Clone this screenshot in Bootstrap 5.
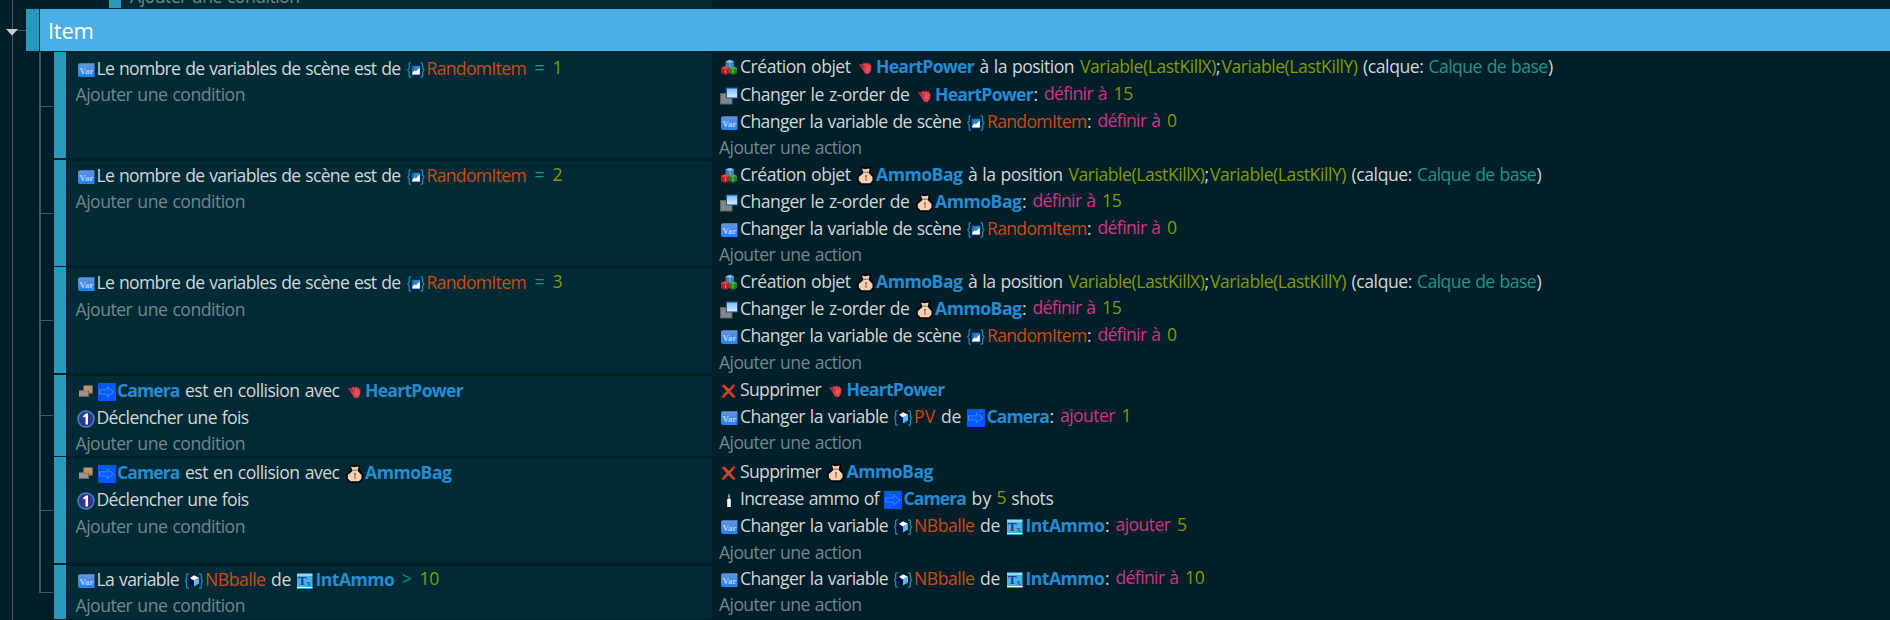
<!DOCTYPE html>
<html lang="fr">
<head>
<meta charset="utf-8">
<title>Item</title>
<link href="https://cdn.jsdelivr.net/npm/bootstrap@5.3.0/dist/css/bootstrap.min.css" rel="stylesheet">
<style>
body{background:#001f29;color:#d2d6d7;font-family:"Open Sans","Noto Sans",sans-serif;font-size:17.6px;line-height:27px;overflow:hidden}
.sheet{height:620px;position:relative;overflow:hidden}
.sheet::before{content:"";position:absolute;left:12px;top:0;bottom:0;width:1px;background:#46575e}
.prev{height:8px;margin:0 0 1px 109px}
.bar{width:12px;background:#2799ba;flex:none}
.prev .cond{width:590px;margin:0 0 0 1px;padding:0 0 0 8px}
.prev .line{margin-top:-17px}
.group-head{height:42px;margin-left:26px;position:relative}
.group-head::before{content:"";position:absolute;left:-13px;top:21px;width:13px;height:1px;background:#46575e}
.group-head .bar{width:13px;margin-right:1px}
.caret{position:absolute;left:-20px;top:20px}
.title{background:#4aafe4;color:#fff;font-size:22px;font-weight:500;padding-left:8px}
.children{padding:1px 0 0 39px;position:relative}
.ev{padding-left:15px;position:relative;padding-bottom:2px}
.ev::before{content:"";position:absolute;left:0;top:0;bottom:0;width:2px;background:#42545a}
.ev::after{content:"";position:absolute;left:0;top:calc(50% - 1px);width:14px;height:1px;background:#46575e}
.ev:first-child::after{top:50%}
.ev:last-child::before{bottom:auto;height:27px}
.tight{padding-bottom:1px}
.ev .bar{margin-right:2px}
.cond{background:#002b36;width:644px;padding:1px 0 0 7.5px;margin-top:1px;flex:none}
.act{padding:1px 0 0 7px}
.line{height:27px;white-space:pre}
.add{height:26px;color:#74868b}
.tight .add{margin-top:-1px}
.ev:first-child .cond{padding-top:2px}
.ev:first-child .act .line:nth-child(2){margin-top:1px}
.ev:first-child .add{margin-top:-1px}
.ev:last-child .cond,.ev:last-child .act{padding-top:0}
.h108{height:108px}.h107{height:107px}.h82{height:82px}.h56{height:55px}
.ic{width:18px;height:18px;flex:none;margin-top:3px;margin-left:6px}
.line>.ic:first-child{margin-left:1px}
.o{color:#268bd2;font-weight:700}
.v{color:#cb4b16}
.n,.e{color:#859900}
.q{color:#229488}
.m{color:#cf3583}
.n,.m,.q{margin-bottom:2px}
.defs{position:absolute}
</style>
</head>
<body>
<svg width="0" height="0" class="defs">
<defs>
<linearGradient id="gb" x1="0" y1="0" x2="0" y2="1"><stop offset="0" stop-color="#6595d8"/><stop offset="1" stop-color="#2182fb"/></linearGradient>
<linearGradient id="gs" x1="0" y1="0" x2="0" y2="1"><stop offset="0" stop-color="#7bbcf5"/><stop offset="1" stop-color="#d5ecff"/></linearGradient>
<linearGradient id="gt" x1="0" y1="0" x2="1" y2="1"><stop offset="0" stop-color="#1769ad"/><stop offset="1" stop-color="#48bdf0"/></linearGradient>
</defs>
</svg>
<template id="icons"><svg>
<g id="var"><path d="M3 2.300H17.500V16H3Q1 16 1 14V4.500Q1 2.300 3 2.300Z" fill="url(#gb)"/><text x="2.500" y="12.600" font-family="Liberation Serif, serif" font-weight="700" font-size="9" textLength="14" lengthAdjust="spacingAndGlyphs" fill="#b4d2ff">Var</text></g>
<g id="scn"><path d="M4 1.800H3Q2.200 1.800 2.200 3V7L.8 9 2.200 11V15Q2.200 16.200 3 16.200H4M13.500 1.800H14.500Q15.600 1.800 15.600 3V7L17 9 15.600 11V15Q15.600 16.200 14.500 16.200H13.500" fill="none" stroke="#2189b8" stroke-width="1.300"/><rect x="4" y="3.800" width="10" height="10.800" fill="#082d68"/><rect x="5.200" y="5" width="7.600" height="8.400" fill="url(#gt)"/><path d="M5.200 13.400V12L7.500 9.500 9 10.500 12.800 6.500V13.400Z" fill="#fff"/></g>
<g id="ovr"><path d="M4 1.800H3Q1.600 1.800 1.600 3V7L.6 9 1.600 11V15Q1.600 16.200 3 16.200H4M14 1.800H15Q16.400 1.800 16.400 3V7L17.400 9 16.400 11V15Q16.400 16.200 15 16.200H14" fill="none" stroke="#2189b8" stroke-width="1.300"/><path d="M9 3.200 14.300 6V11.500L9 14.800 4 11.500V6Z" fill="#030c54"/><path d="M9 3.200 14 5.800 9 8.500 5 6Z" fill="#fff"/><path d="M9 8.500 14 5.800V11.500L9 14.600Z" fill="#51bfee"/></g>
<g id="heart"><path d="M2 5.500 5.500 5.500 7 3.500 8.500 5 10 3 11 5 13 4.200 13.200 6 14.500 6.500 14 12 11.500 15.300 8 14.500 6 11Z" fill="#d9404d"/><path d="M2 5.500 6 5.800 8 8 6.500 10Z" fill="#a52f3b"/><path d="M9 7 13 8 12 12 9 12Z" fill="#e5525c"/></g>
<g id="bag"><path d="M4 0H14V5L17 9V14L14 18H4L0 14V9L5 5Z" fill="#060606"/><path d="M5 1.500 8 2.300 12.500 1.500 11.800 6 15.500 10V13.500L13 16.200H4.500L1.800 13.500V10L6.500 6Z" fill="#f6cfb5"/><path d="M6 5.200H12" stroke="#80664f"/><path d="M9 8V14" stroke="#c58a52" stroke-width="1.700"/><path d="M9 8V10" stroke="#57646b"/></g>
<g id="cam"><rect width="18" height="18" fill="#0058ff"/><path d="M1.500 6.800H9.500V3.800L16 9 9.500 14V11H1.500Z" fill="#075cff" stroke="#4389ff" stroke-width=".9"/></g>
<g id="tx"><rect x="1" y="1.300" width="15.500" height="15.500" fill="#45b3e3"/><path d="M1 3H16.500M1 15.500H16.500" stroke="#e6faff" stroke-width="1.200"/><text x="2" y="12.800" font-family="Liberation Serif, serif" font-weight="700" font-size="13" fill="#22348c">T</text><text x="10.500" y="14" font-family="Liberation Serif, serif" font-weight="700" font-size="9" fill="#35569e">x</text></g>
<g id="cubes"><path d="M5.500 2.500 10 .8 14 2.500V8L10 10 5.500 8Z" fill="#347fc1"/><path d="M5.500 2.500 10 .8 14 2.500 10 4.300Z" fill="#85bee8"/><path d="M1 9 5.500 7 9.500 9V14L5.500 16 1 14Z" fill="#b71d25"/><path d="M1 9 5.500 7 9.500 9 5.500 10.800Z" fill="#d84650"/><path d="M9 9 13 7 17 9V14L13 16 9 14Z" fill="#178423"/><path d="M9 9 13 7 17 9 13 10.800Z" fill="#46ad47"/><path d="M10 4.500V8M5.500 11V14M13 11V14" stroke="#ffffff66" stroke-width="1.200"/></g>
<g id="z"><rect y="6" width="12.500" height="11.500" fill="#5d6365"/><rect x="1" y="7" width="10.500" height="9.500" fill="#828787"/><rect x="5.800" y=".5" width="12" height="11" fill="#225c99"/><rect x="7" y="1.600" width="10" height="8.800" fill="url(#gs)"/></g>
<g id="del"><path d="M2 4Q3 2 5 3L9 7 13 2.500 15.500 3 10.500 9 15.500 15 13.500 16 8.500 11 3.500 16 1.500 15 6.500 9Z" fill="#cd4929" stroke="#842817" stroke-width=".9"/></g>
<g id="ammo"><path d="M8 5Q9 0 10 5V9H8Z" fill="#9ca4a6"/><path d="M7.200 8H10.800V16H7.200Z" fill="#fff"/><path d="M7.500 6.500H10.500" stroke="#5e6869"/></g>
<g id="col"><rect x="6.500" y="2.500" width="9" height="8" fill="#bd946b"/><path d="M6.500 10H15.500V3.500" fill="none" stroke="#806040"/><rect x="2" y="7.500" width="9.500" height="6.500" fill="#999593"/><path d="M2 13.500H11.500V7.500" fill="none" stroke="#6d6866"/><rect x="6.500" y="7.500" width="4" height="2" fill="#b56f6d"/></g>
<g id="once"><circle cx="9" cy="9" r="8" fill="#31358f" stroke="#338dbd" stroke-width="1.500"/><path d="M6 6 9 3.500H11V14.500H8.500V6.500L6.500 7.500Z" fill="#fff"/></g>
</svg></template>

<main class="sheet">
  <div class="prev d-flex"><div class="bar"></div><div class="cond overflow-hidden" id="prev"></div></div>
  <header class="group-head d-flex">
    <svg class="caret" width="12" height="7"><path d="M0 0H12L6 6.500Z" fill="#cfcdcb"/></svg>
    <div class="bar"></div>
    <div class="title flex-grow-1 d-flex align-items-center"><span data-w="45.5">Item</span></div>
  </header>
  <section class="children" id="events"></section>
</main>
<script src="https://cdn.jsdelivr.net/npm/bootstrap@5.3.0/dist/js/bootstrap.bundle.min.js"></script>
<script>
// token: "#icon" or [kind, text, width, gap before]
const t = (s, w, g = 5.5) => ['t', s, w, g];
const first = (s, w) => t(s, w, 2);
const obj = {
  heart: ['#heart', ['o', 'HeartPower', 98, 1.5]],
  bag: ['#bag', ['o', 'AmmoBag', 86.5, 1.5]],
  cam: ['#cam', ['o', 'Camera', 62.5, 1.5]],
  int: ['#tx', ['o', 'IntAmmo', 79, 1.5]]
};
const colon = t(':', 5, 0.5);
const rnd = ['#scn', ['v', 'RandomItem', 99.5, 2]];
const nb = ['#ovr', ['v', 'NBballe', 60.5, 2]];
const num = (s, g = 6.5) => ['n', s, s.length * 9.8, g];
const set = n => [['m', 'définir à', 63, 5.5], num(n)];
const add = n => [['m', 'ajouter', 55, 5.5], num(n)];
const addCond = ['+', 'Ajouter une condition', 169.5];
const addAct = ['+', 'Ajouter une action', 142.5];
const item = n => ['#var', first('Le nombre de variables de scène est de', 304), ...rnd, ['q', '=', 10.5, 8.5], num(n, 7.5)];
const create = o => ['#cubes', first('Création objet', 110.5), ...o, t('à la position', 94.5), ['e', 'Variable(LastKillX)', 136, 6], t(';', 5, 0), ['e', 'Variable(LastKillY)', 136, 0.5], t('(calque:', 60.5, 5.5), ['q mb-0', 'Calque de base', 119, 5], t(')', 6, 0.5)];
const zorder = o => ['#z', first('Changer le z-order de', 169.5), ...o, colon, ...set('15')];
const reset = ['#var', first('Changer la variable de scène', 221), ...rnd, colon, ...set('0')];
const chg = first('Changer la variable', 148);
const once = ['#once', first('Déclencher une fois', 152)];
const hit = o => ['#col', '#cam:3', obj.cam[1], t('est en collision avec', 154.5), ...o];
const drop = o => ['#del', first('Supprimer', 81), ...o];

const events = [
  ['h108', [item('1'), addCond], [create(obj.heart), zorder(obj.heart), reset, addAct]],
  ['h107 tight', [item('2'), addCond], [create(obj.bag), zorder(obj.bag), reset, addAct]],
  ['h108', [item('3'), addCond], [create(obj.bag), zorder(obj.bag), reset, addAct]],
  ['h82 tight', [hit(obj.heart), once, addCond],
    [drop(obj.heart), ['#var', chg, '#ovr', ['v', 'PV', 21.5, 2], t('de', 20), ...obj.cam, colon, ...add('1')], addAct]],
  ['h108', [hit(obj.bag), once, addCond],
    [drop(obj.bag), ['#ammo', first('Increase ammo of', 139), '#cam:5', obj.cam[1], t('by', 20), num('5', 5), t('shots', 42, 5)],
     ['#var', chg, ...nb, t('de', 20), ...obj.int, colon, ...add('5')], addAct]],
  ['h56 tight', [['#var', first('La variable', 82.5), ...nb, t('de', 20), '#tx:5', obj.int[1], ['q', '>', 10.5, 7.5], num('10', 7)], addCond],
    [['#var', chg, ...nb, t('de', 20), ...obj.int, colon, ...set('10')], addAct]]
];

const icons = document.getElementById('icons').content;
const token = k => {
  if (typeof k === 'string') {
    const [id, gap] = k.split(':');
    return `<svg class="ic" viewBox="0 0 18 18"${gap ? ` style="margin-left:${gap}px"` : ''}>${icons.querySelector(id).innerHTML}</svg>`;
  }
  return `<span class="${k[0]}" data-w="${k[2]}" style="margin-left:${k[3]}px">${k[1]}</span>`;
};
const line = l => l[0] === '+'
  ? `<div class="line add"><span data-w="${l[2]}">${l[1]}</span></div>`
  : `<div class="line d-flex align-items-center">${l.map(token).join('')}</div>`;

document.getElementById('prev').innerHTML = line(addCond);
document.getElementById('events').innerHTML = events.map(([cls, c, a]) =>
  `<article class="ev d-flex ${cls}"><div class="bar"></div><div class="cond">${c.map(line).join('')}</div><div class="act">${a.map(line).join('')}</div></article>`).join('');

document.querySelectorAll('[data-w]').forEach(s => {
  const w = +s.dataset.w, n = s.textContent.length;
  s.style.wordSpacing = '1px';
  s.style.letterSpacing = (w - s.getBoundingClientRect().width) / n + 'px';
});
</script>
</body>
</html>
